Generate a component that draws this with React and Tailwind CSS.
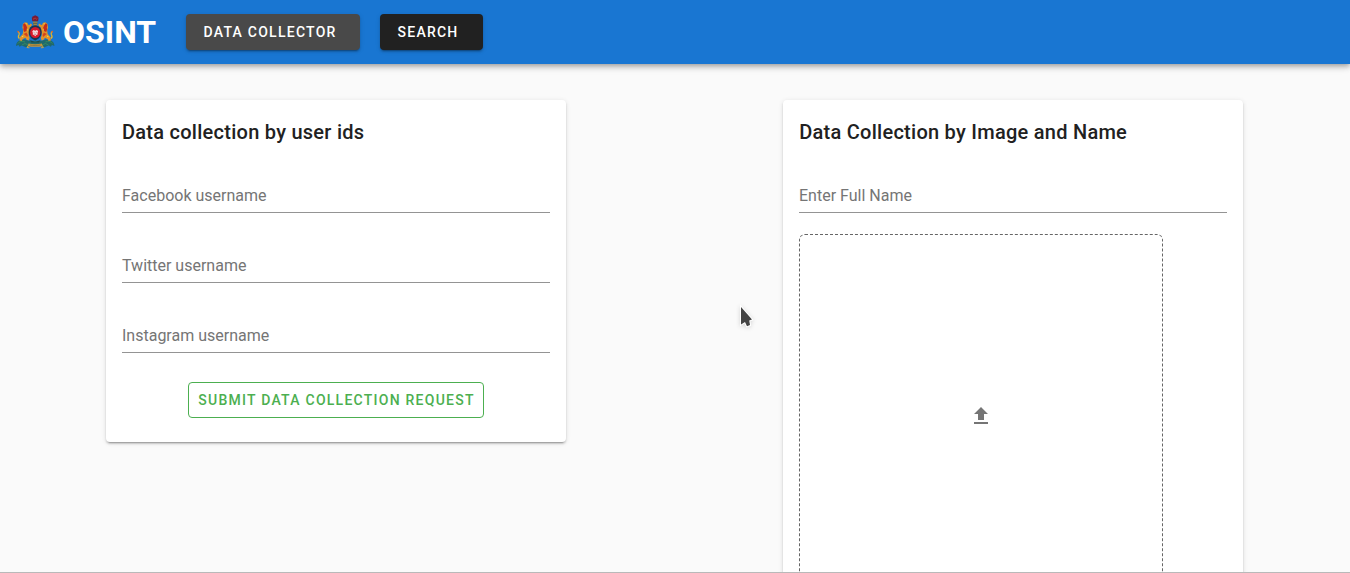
const cardShadow =
  'shadow-[0_3px_1px_-2px_rgba(0,0,0,0.2),0_2px_2px_0_rgba(0,0,0,0.14),0_1px_5px_0_rgba(0,0,0,0.12)]';

function Lion({ transform }) {
  return (
    <g transform={transform}>
      <path d="M9.500 28.500c-1.800-1.200-1.200-2.700-.4-4 .5-1.300-.1-2.200-1-2.700" fill="none" stroke="#e3b52c" strokeWidth="1.300" />
      <path d="M7.300 20.800l1.700.3.200 1.400-1.600.1z" fill="#e0662a" />
      <path d="M9.500 30.500l.6-3.500 2.600-3 .5-3.500-.8-3 .5-3.500 2-1.700 2.500.5.900 2 1.300.2.700-1.500 1.600.7-.4 2-2 1.200.8 2.300 1 .5-.6 1.500-1.700.2-.3 3.300 1 2.700-1 2.600-2-.8-1.300-2-2.800 1.500-.8 1.800z" fill="#e0922a" />
      <path d="M13 14.500l1.600-1.300 1.400 1.800 1.200 2.500-.7 3.600-2.300 1-.9-2.600.3-2z" fill="#c42c1c" />
      <path d="M13.500 24l3-1.500 1.300 2.500-.5 2-1.800-1.500z" fill="#d3441f" />
      <path d="M15.500 13l1.300.5-.3 1.200zM16.800 18.500l1 1.200-.8 1.200zM11.500 26.500l2-1-.5 1.800z" fill="#f8dc4a" />
    </g>
  );
}

function Emblem() {
  return (
    <svg width="50" height="44" viewBox="0 0 50 44" className="block shrink-0" aria-hidden="true">
      <path d="M6 36c0-3 1.500-5 4.500-6l4-.5 4.500 1.200h12.400l4.500-1.200 4 .5c3 1 4.500 3 4.500 6l-2.500-1-1 1.800-2.200-1.200-4.200 1.600-4-1.200h-10.600l-4 1.200-4.200-1.600-2.200 1.200-1-1.800z" fill="#20696b" />
      <path d="M8 33.500c1.500-2.200 4-2.700 7-1.500M42.400 33.500c-1.500-2.200-4-2.700-7-1.500M12 35l3-1.500 3 1.500M38.400 35l-3-1.500-3 1.500" fill="none" stroke="#399160" strokeWidth=".8" />
      <Lion />
      <Lion transform="translate(50.400 0) scale(-1 1)" />
      <path d="M22.300 11.200l-.5-3.500 1.500-1.500 1.900-.9 1.900.9 1.500 1.500-.5 3.500z" fill="#781a36" />
      <path d="M23 8.500l1 .8 1.200-1.500 1.200 1.500 1-.8" fill="none" stroke="#c34b35" strokeWidth=".7" />
      <path d="M23 11.200h4.400v2l-.6 3.300h-3.200l-.6-3.300z" fill="#5f654f" />
      <path d="M23 12.300h4.400M23.500 14.500h3.400" stroke="#c5a045" strokeWidth=".6" />
      <path d="M25.200 15.500c4 0 6.500 2.800 6.500 6.500 0 3.800-2.500 7-6.500 8.500-4-1.500-6.500-4.700-6.500-8.500 0-3.700 2.500-6.500 6.500-6.500z" fill="#183653" />
      <ellipse cx="25.200" cy="22.500" rx="5.100" ry="5.600" fill="#d7182b" />
      <path d="M22.300 21.200l1.200-1.200 1.700.8 1.700-.8 1.200 1.200-.6 1.800.2 1.600-1.400.5-1.100 1.200-1.100-1.200-1.400-.5.2-1.600z" fill="#f1d9dc" />
      <path d="M23.700 22.300l.8.400M26.700 22.300l-.8.400M24.300 24.300h1.800" stroke="#a84651" strokeWidth=".6" />
      <path d="M20 30.300l2.500.7 2.700 1.200 2.700-1.200 2.500-.7-1.400 2.200h-7.600z" fill="#20474a" />
      <path d="M18.500 33.500c4.500 1 8.900 1 13.400 0l.8 2.700c-5 .8-10 .8-15 0z" fill="#c6963c" />
      <path d="M20 35c3.500.5 7 .5 10.400 0" fill="none" stroke="#6f6742" strokeWidth=".7" />
      <path d="M18.300 35.500l-1.300 2 2.500.3M32.100 35.500l1.300 2-2.500.3" fill="none" stroke="#d6a638" strokeWidth=".9" />
    </svg>
  );
}

function Field({ label }) {
  return (
    <div className="flex h-[34px] items-center border-b border-[#949494] text-base tracking-normal text-[#757575]">
      <span>{label}</span>
    </div>
  );
}

function NavButton({ children, className }) {
  return (
    <button
      className={`flex h-9 items-center rounded pl-[17.5px] text-sm font-medium tracking-[1.25px] text-white ${cardShadow} ${className}`}
    >
      {children}
    </button>
  );
}

export default function App() {
  return (
    <div className="relative flex h-[573px] flex-col overflow-hidden border-b border-[#b9b9b9] bg-[#fafafa] font-[Roboto,sans-serif] text-[#212121]">
      <header className="z-10 flex h-16 shrink-0 items-center bg-[#1976d2] pl-2.5 shadow-[0_2px_4px_-1px_rgba(0,0,0,0.2),0_4px_5px_0_rgba(0,0,0,0.14),0_1px_10px_0_rgba(0,0,0,0.12)]">
        <Emblem />
        <h1 className="ml-[3px] w-[123px] text-[32px] leading-8 font-bold text-white">OSINT</h1>
        <NavButton className="w-[174px] bg-[#494949]">DATA COLLECTOR</NavButton>
        <NavButton className="ml-5 w-[103px] bg-[#212121]">SEARCH</NavButton>
      </header>

      <main className="flex min-h-0 flex-1 items-start gap-[217px] pt-9 pl-[106px]">
        <section className={`h-[342px] w-[460px] shrink-0 rounded bg-white px-4 pt-4 ${cardShadow}`}>
          <h2 className="text-xl leading-8 font-medium tracking-[0.26px]">Data collection by user ids</h2>
          <div className="mt-[31px] flex flex-col gap-9">
            <Field label="Facebook username" />
            <Field label="Twitter username" />
            <Field label="Instagram username" />
          </div>
          <div className="mt-[29px] flex justify-center">
            <button className="h-9 w-[296px] rounded border border-[#4caf50] pl-px text-sm font-medium tracking-[1.25px] whitespace-nowrap text-[#4caf50]">
              SUBMIT DATA COLLECTION REQUEST
            </button>
          </div>
        </section>

        <section className={`h-[560px] w-[460px] shrink-0 rounded bg-white px-4 pt-4 ${cardShadow}`}>
          <h2 className="pl-[0.25px] text-xl leading-8 font-medium tracking-[0.26px]">Data Collection by Image and Name</h2>
          <div className="mt-[31px]">
            <Field label="Enter Full Name" />
          </div>
          <div className="mt-[21px] flex h-[364px] w-[364px] items-center justify-center rounded-md border border-dashed border-[#666666]">
            <svg width="24" height="24" viewBox="0 0 24 24" fill="#757575" aria-hidden="true">
              <path d="M9 16v-6H5l7-7 7 7h-4v6H9m-4 4v-2h14v2H5z" />
            </svg>
          </div>
        </section>
      </main>

      <svg className="absolute top-[304px] left-[738px] drop-shadow-sm" width="18" height="26" viewBox="0 0 18 26" aria-hidden="true">
        <path
          d="M3 3v17.500l4-2.500 2 4.200 3-1.200-.8-4.500 2.800-1z"
          fill="#444444"
          stroke="#ffffff"
          strokeWidth="2"
          paintOrder="stroke"
        />
      </svg>
    </div>
  );
}
